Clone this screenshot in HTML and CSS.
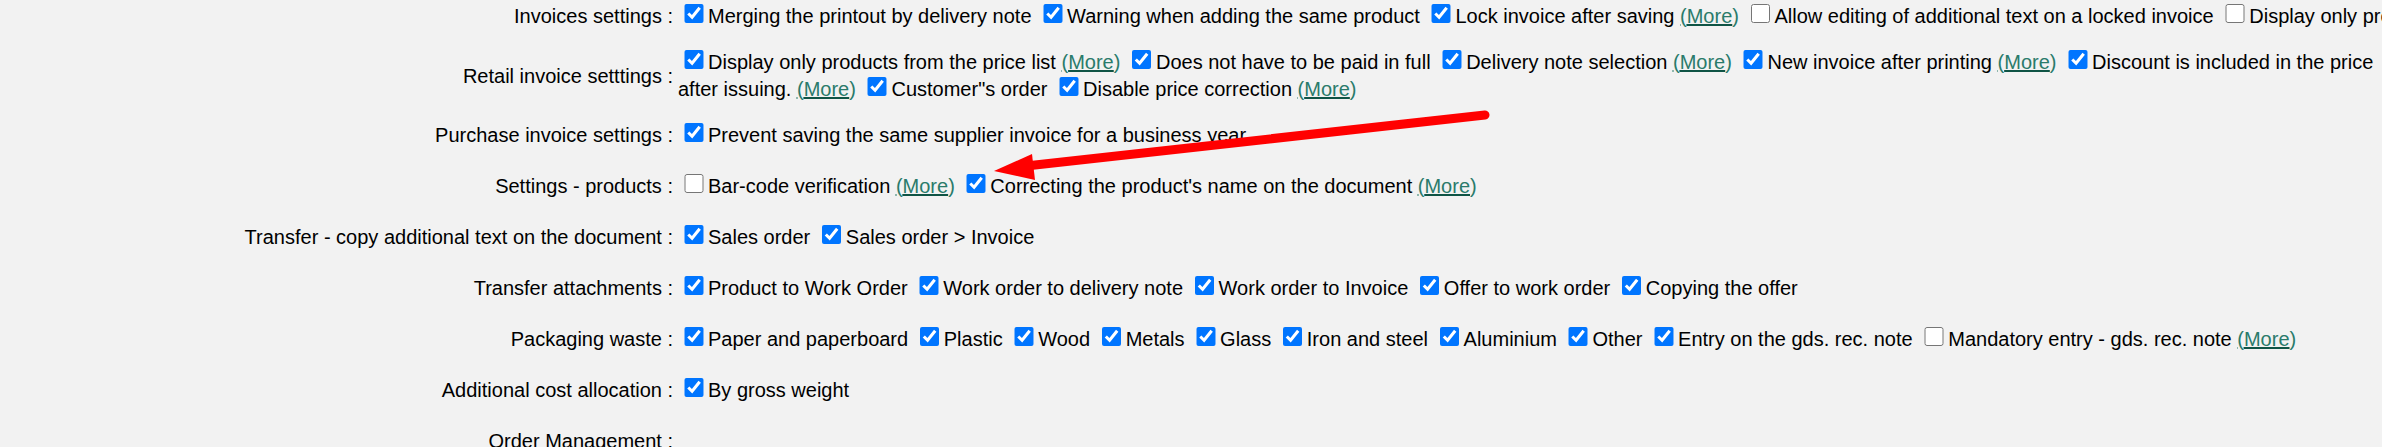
FILE: index.html
```html
<!DOCTYPE html>
<html>
<head>
<meta charset="utf-8">
<link rel="stylesheet" href="styles.css">
</head>
<body>
<div class="page">
  <div class="settings">
    <div class="row">
      <div class="label">Invoices settings :</div>
      <div class="value nowrap"><input type="checkbox" checked><span>Merging the printout by delivery note</span> <input type="checkbox" checked><span>Warning when adding the same product</span> <input type="checkbox" checked><span>Lock invoice after saving</span> <a class="more" href="#">(<span>More</span>)</a> <input type="checkbox"><span>Allow editing of additional text on a locked invoice</span> <input type="checkbox"><span>Display only products with stock</span></div>
    </div>

    <div class="row">
      <div class="label">Retail invoice setttings :</div>
      <div class="value"><input type="checkbox" checked><span>Display only products from the price list</span> <a class="more" href="#">(<span>More</span>)</a> <input type="checkbox" checked><span>Does not have to be paid in full</span> <input type="checkbox" checked><span>Delivery note selection</span> <a class="more" href="#">(<span>More</span>)</a> <input type="checkbox" checked><span>New invoice after printing</span> <a class="more" href="#">(<span>More</span>)</a> <input type="checkbox" checked><span>Discount is included in the price after issuing.</span> <a class="more" href="#">(<span>More</span>)</a> <input type="checkbox" checked><span>Customer"s order</span> <input type="checkbox" checked><span>Disable price correction</span> <a class="more" href="#">(<span>More</span>)</a></div>
    </div>

    <div class="row">
      <div class="label">Purchase invoice settings :</div>
      <div class="value"><input type="checkbox" checked><span>Prevent saving the same supplier invoice for a business year</span></div>
    </div>

    <div class="row spaced">
      <div class="label">Settings - products :</div>
      <div class="value"><input type="checkbox"><span>Bar-code verification</span> <a class="more" href="#">(<span>More</span>)</a> <input type="checkbox" checked><span>Correcting the product's name on the document</span> <a class="more" href="#">(<span>More</span>)</a></div>
    </div>

    <div class="row spaced">
      <div class="label">Transfer - copy additional text on the document :</div>
      <div class="value"><input type="checkbox" checked><span>Sales order</span> <input type="checkbox" checked><span>Sales order &gt; Invoice</span></div>
    </div>

    <div class="row spaced">
      <div class="label">Transfer attachments :</div>
      <div class="value"><input type="checkbox" checked><span>Product to Work Order</span> <input type="checkbox" checked><span>Work order to delivery note</span> <input type="checkbox" checked><span>Work order to Invoice</span> <input type="checkbox" checked><span>Offer to work order</span> <input type="checkbox" checked><span>Copying the offer</span></div>
    </div>

    <div class="row spaced">
      <div class="label">Packaging waste :</div>
      <div class="value"><input type="checkbox" checked><span>Paper and paperboard</span> <input type="checkbox" checked><span>Plastic</span> <input type="checkbox" checked><span>Wood</span> <input type="checkbox" checked><span>Metals</span> <input type="checkbox" checked><span>Glass</span> <input type="checkbox" checked><span>Iron and steel</span> <input type="checkbox" checked><span>Aluminium</span> <input type="checkbox" checked><span>Other</span> <input type="checkbox" checked><span>Entry on the gds. rec. note</span> <input type="checkbox"><span>Mandatory entry - gds. rec. note</span> <a class="more" href="#">(<span>More</span>)</a></div>
    </div>

    <div class="row spaced">
      <div class="label">Additional cost allocation :</div>
      <div class="value"><input type="checkbox" checked><span>By gross weight</span></div>
    </div>

    <div class="row spaced">
      <div class="label">Order Management :</div>
      <div class="value"></div>
    </div>
  </div>

  <svg class="arrow" width="2382" height="447" viewBox="0 0 2382 447">
    <line x1="1485" y1="115" x2="1026" y2="166" stroke="#ff0000" stroke-width="9" stroke-linecap="round"/>
    <polygon points="994,171 1032,154 1035,180" fill="#ff0000"/>
  </svg>
</div>
</body>
</html>
```

FILE: styles.css
```css
html, body {
  margin: 0;
  padding: 0;
  background: #f2f2f2;
  overflow: hidden;
}

body {
  font-family: "Liberation Sans", Arial, sans-serif;
  font-size: 20px;
  color: #000;
}

.page {
  position: relative;
  width: 2382px;
  height: 447px;
  overflow: hidden;
}

.settings {
  display: flex;
  flex-direction: column;
  gap: 19px;
  padding-top: 3px;
  line-height: 27px;
}

.row {
  display: grid;
  grid-template-columns: 673px 1722px;
  column-gap: 5px;
  align-items: center;
}

.row.spaced {
  margin-top: 5px;
}

.label {
  text-align: right;
  white-space: nowrap;
}

.value {
  min-height: 27px;
}

.nowrap {
  white-space: nowrap;
}

.value input[type="checkbox"] {
  width: 19.5px;
  height: 19.5px;
  margin: 0 4.5px 0 6px;
  vertical-align: baseline;
}

.more {
  color: #2a7b6b;
  text-decoration: underline dotted #8fb8ae;
}

.more span {
  text-decoration: underline solid #0f5445;
  text-decoration-thickness: 2px;
}

.arrow {
  position: absolute;
  left: 0;
  top: 0;
  pointer-events: none;
}
```
